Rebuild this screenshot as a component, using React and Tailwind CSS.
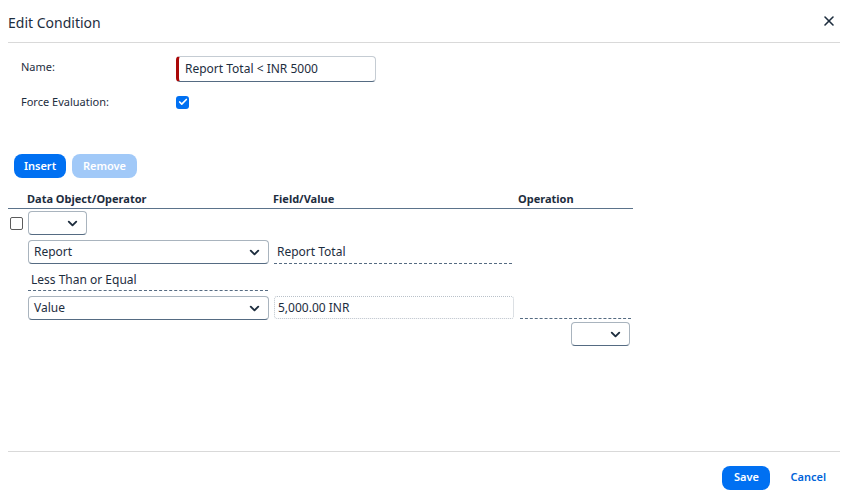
import { X, ChevronDown, Check } from 'lucide-react';

const font = { fontFamily: '"Noto Sans", "Open Sans", Arial, sans-serif' };

function Select({ value, className = '' }) {
  return (
    <div className={`flex items-center justify-between h-[24px] rounded-[4px] border border-[#a9b4be] border-b-[#556b82] bg-white pl-[5px] pr-[6px] text-[12px] text-[#1d2d3e] ${className}`}>
      <span>{value}</span>
      <ChevronDown className="w-[15px] h-[15px] text-[#1d2d3e]" strokeWidth={3} />
    </div>
  );
}

export default function App() {
  return (
    <div style={font} className="w-[848px] h-[499px] bg-white text-[#1d2d3e] flex flex-col">
      {/* Header */}
      <div className="mx-2 h-[43px] flex items-center justify-between border-b border-[#d9d9d9] pr-[3px]">
        <h1 className="text-[14px] pt-[3px]">Edit Condition</h1>
        <X className="w-[16px] h-[16px] text-[#1d2d3e]" strokeWidth={2.4} />
      </div>

      {/* Body */}
      <div className="flex-1 pl-[8px]">
        <div className="pl-[13px] pt-[13px]">
          <div className="flex items-start h-[26px]">
            <label className="w-[155px] text-[11px] pt-[3px]">Name:</label>
            <div className="w-[200px] h-[26px] flex items-center rounded-[4px] border border-[#c5ccd3] border-b-[#556b82] border-l-[3px] border-l-[#aa0808] pl-[6px] text-[12px]">
              Report Total &lt; INR 5000
            </div>
          </div>
          <div className="flex items-center mt-[12px] h-[16px]">
            <label className="w-[155px] text-[11px]">Force Evaluation:</label>
            <div className="w-[13px] h-[13px] rounded-[3px] bg-[#0070f2] flex items-center justify-center">
              <Check className="w-[10px] h-[10px] text-white" strokeWidth={4} />
            </div>
          </div>
        </div>

        <div className="flex gap-[6px] mt-[44px] pl-[6px]">
          <button className="h-[24px] w-[52px] rounded-[8px] bg-[#0070f2] text-white text-[11px] font-semibold">Insert</button>
          <button className="h-[24px] w-[65px] rounded-[8px] bg-[#a1c9f8] text-white text-[11px] font-semibold">Remove</button>
        </div>

        {/* Table */}
        <div className="w-[625px] mt-[15px]">
          <div className="grid grid-cols-[19px_246px_245px_115px] border-b border-[#5b738b] text-[11px] font-bold h-[16px] items-end">
            <span />
            <span className="leading-[16px] -translate-y-[2px]">Data Object/Operator</span>
            <span className="leading-[16px] -translate-y-[2px]">Field/Value</span>
            <span className="leading-[16px] -translate-y-[2px]">Operation</span>
          </div>

          <div className="grid grid-cols-[20px_245px_245px_115px] gap-y-[5px] pt-[2px]">
            {/* row 1 */}
            <div className="flex items-center">
              <div className="ml-[2px] w-[13px] h-[13px] rounded-[2px] border border-[#5b5b5b] bg-white" />
            </div>
            <Select value="" className="w-[59px]" />
            <div />
            <div />

            {/* row 2 */}
            <div />
            <Select value="Report" className="w-[241px]" />
            <div className="ml-[1px] w-[238px] h-[24px] flex items-center border-b border-dashed border-[#556b82] pl-[3px] text-[12px]">Report Total</div>
            <div />

            {/* row 3 */}
            <div />
            <div className="w-[240px] h-[22px] flex items-center border-b border-dashed border-[#556b82] pl-[3px] text-[12px]">Less Than or Equal</div>
            <div />
            <div />

            {/* row 4 */}
            <div />
            <Select value="Value" className="w-[241px]" />
            <div className="ml-[1px] w-[240px] h-[23px] flex items-center rounded-[3px] border border-dotted border-[#b9c1c9] pl-[3px] text-[12px]">5,000.00 INR</div>
            <div className="ml-[2px] w-[111px] h-[23px] border-b border-dashed border-[#556b82]" />

            {/* row 5 */}
            <div />
            <div />
            <div />
            <div className="flex justify-end pr-[3px] -mt-[3px]">
              <Select value="" className="w-[59px]" />
            </div>
          </div>
        </div>
      </div>

      {/* Footer */}
      <div className="mx-2 h-[48px] border-t border-[#d9d9d9] flex items-center justify-end gap-[20px] pr-[14px] pt-[4px]">
        <button className="h-[24px] w-[48px] rounded-[8px] bg-[#0070f2] text-white text-[11px] font-semibold">Save</button>
        <button className="text-[#0064d9] text-[11px] font-semibold">Cancel</button>
      </div>
    </div>
  );
}
